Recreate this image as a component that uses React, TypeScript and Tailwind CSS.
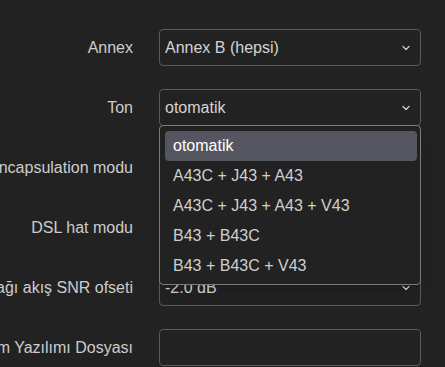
import { ChevronDown } from 'lucide-react';

/* ── Data ── */
const ROWS = [
  { label: 'Annex', value: 'Annex B (hepsi)', select: true },
  { label: 'Ton', value: 'otomatik', select: true, open: true },
  { label: 'Encapsulation modu', value: 'PTM/EFM (Paket Transfer Modu)', select: true },
  { label: 'DSL hat modu', value: 'VDSL', select: true },
  { label: 'Aşağı akış SNR ofseti', value: '-2.0 dB', select: true },
  { label: 'Modem Yazılımı Dosyası', value: '', select: false },
];

const OPTIONS = ['otomatik', 'A43C + J43 + A43', 'A43C + J43 + A43 + V43', 'B43 + B43C', 'B43 + B43C + V43'];

function Dropdown() {
  return (
    <div className="absolute left-0 top-[36px] z-10 w-full rounded-[4px] border border-[#7c7c7c] bg-[#222222] pt-[5px] pb-[3px] shadow-lg">
      {OPTIONS.map((opt, i) => (
        <div
          key={opt}
          className={
            i === 0
              ? 'ml-[5px] mr-[3px] flex h-[30px] items-center rounded-[4px] bg-[#55555f] px-[8px] text-white'
              : 'ml-[5px] mr-[3px] flex h-[30px] items-center px-[8px] text-[#cfcfcf]'
          }
        >
          {opt}
        </div>
      ))}
    </div>
  );
}

export default function App() {
  return (
    <div
      className="h-[367px] w-[445px] overflow-hidden bg-[#222222] text-[16px] text-[#cdcdcd]"
      style={{ fontFamily: '"Liberation Sans", Arial, sans-serif' }}
    >
      <div className="flex flex-col gap-[23px] pt-[29px]">
        {ROWS.map((row) => (
          <div key={row.label} className="flex h-[37px] items-center gap-[26px]">
            <div className="flex w-[133px] shrink-0 justify-end whitespace-nowrap">{row.label}</div>
            <div className="relative h-[37px] w-[262px] shrink-0">
              <div className="flex h-full w-full items-center rounded-[4px] border border-[#5a5a5a] pl-[5px] pr-[8px]">
                <span className="flex-1 truncate text-[#d4d4d4]">{row.value}</span>
                {row.select && <ChevronDown className="h-[12px] w-[12px] text-[#cfcfcf]" strokeWidth={2.5} />}
              </div>
              {row.open && <Dropdown />}
            </div>
          </div>
        ))}
      </div>
    </div>
  );
}
